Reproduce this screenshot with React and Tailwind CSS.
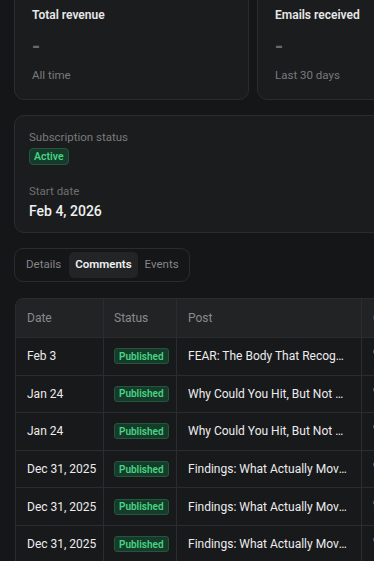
import React from 'react';

const rows = [
  { date: 'Feb 3', post: 'FEAR: The Body That Recognizes Danger', comment: '"This landed hard for me' },
  { date: 'Jan 24', post: 'Why Could You Hit, But Not Keep Going?', comment: '"Such a good read' },
  { date: 'Jan 24', post: 'Why Could You Hit, But Not Keep Going?', comment: '"Thank you for this' },
  { date: 'Dec 31, 2025', post: 'Findings: What Actually Moved the Needle', comment: '"Great breakdown' },
  { date: 'Dec 31, 2025', post: 'Findings: What Actually Moved the Needle', comment: '"Loved this' },
  { date: 'Dec 31, 2025', post: 'Findings: What Actually Moved the Needle', comment: '"Very helpful' },
];

function Badge({ children, className = '' }) {
  return (
    <span
      className={`flex w-fit items-center rounded-[3px] border border-[#22573d] bg-[#163b2a] font-semibold text-[#45d483] ${className}`}
    >
      {children}
    </span>
  );
}

function StatCard({ title, sub }) {
  return (
    <div className="rounded-[10px] border border-[#2b2c2f] bg-[#1b1c1e] px-[17px] pt-[17px] pb-[15px]">
      <div className="text-[12px] font-semibold text-[#e8e8e8] leading-[18px]">{title}</div>
      <div className="mt-[8px] text-[22px] font-semibold text-[#6a6a6c] leading-[30px]">-</div>
      <div className="mt-[4px] text-[11.5px] text-[#7a7a7c] leading-[18px]">{sub}</div>
    </div>
  );
}

export default function App() {
  return (
    <div
      className="min-h-screen w-[374px] h-[561px] overflow-hidden bg-[#151618] text-[#e6e6e6]"
      style={{ fontFamily: 'Roboto, "Noto Sans", sans-serif' }}
    >
      <div className="-mt-[12px] pl-[14px] w-[700px]">
        <div className="grid grid-cols-[235px_235px] gap-[8px]">
          <StatCard title="Total revenue" sub="All time" />
          <StatCard title="Emails received" sub="Last 30 days" />
        </div>

        <div className="mt-[15px] w-[478px] rounded-[10px] border border-[#2b2c2f] bg-[#1b1c1e] px-[14px] pt-[12px] pb-[11px]">
          <div className="text-[11.5px] text-[#7a7a7c] leading-[18px]">Subscription status</div>
          <Badge className="mt-[2px] h-[17px] px-[4px] text-[10.5px] rounded-[4px]">Active</Badge>
          <div className="mt-[17px] text-[11.5px] text-[#6f6f71] leading-[18px]">Start date</div>
          <div className="mt-[1px] text-[14px] font-medium text-[#f0f0f0] leading-[20px]">Feb 4, 2026</div>
        </div>

        <div className="mt-[15px] inline-flex items-center rounded-[9px] border border-[#2b2c2f] p-[3px]">
          <button className="h-[26px] px-[8px] text-[11.5px] text-[#858587]">Details</button>
          <button className="h-[26px] px-[6px] rounded-[5px] bg-[#232426] text-[11.5px] font-semibold text-[#f0f0f0]">
            Comments
          </button>
          <button className="h-[26px] px-[7px] text-[11.5px] text-[#858587]">Events</button>
        </div>

        <div className="mt-[16px] ml-px w-[640px] overflow-hidden rounded-tl-[8px] border border-[#2b2c2f] bg-[#18191b]">
          <div className="grid h-[38px] grid-cols-[88px_73px_185px_1fr] bg-[#222325] text-[12px] text-[#8a8a8c]">
            <div className="flex items-center px-[11px] border-r border-[#2b2c2f]">Date</div>
            <div className="flex items-center px-[10px] border-r border-[#2b2c2f]">Status</div>
            <div className="flex items-center px-[11px] border-r border-[#2b2c2f]">Post</div>
            <div className="flex items-center px-[11px]">Comment</div>
          </div>
          {rows.map((r, i) => (
            <div
              key={i}
              className="grid h-[37.6px] grid-cols-[88px_73px_185px_1fr] border-t border-[#2b2c2f] text-[12px] text-[#ececee]"
            >
              <div className="flex items-center px-[11px] border-r border-[#2b2c2f] whitespace-nowrap overflow-hidden">{r.date}</div>
              <div className="flex items-center px-[10px] border-r border-[#2b2c2f]">
                <Badge className="h-[16px] px-[4px] text-[10px]">Published</Badge>
              </div>
              <div className="flex items-center px-[11px] border-r border-[#2b2c2f] min-w-0">
                <span className="truncate">{r.post}</span>
              </div>
              <div className="flex items-center px-[11px] whitespace-nowrap">{r.comment}</div>
            </div>
          ))}
        </div>
      </div>
    </div>
  );
}
